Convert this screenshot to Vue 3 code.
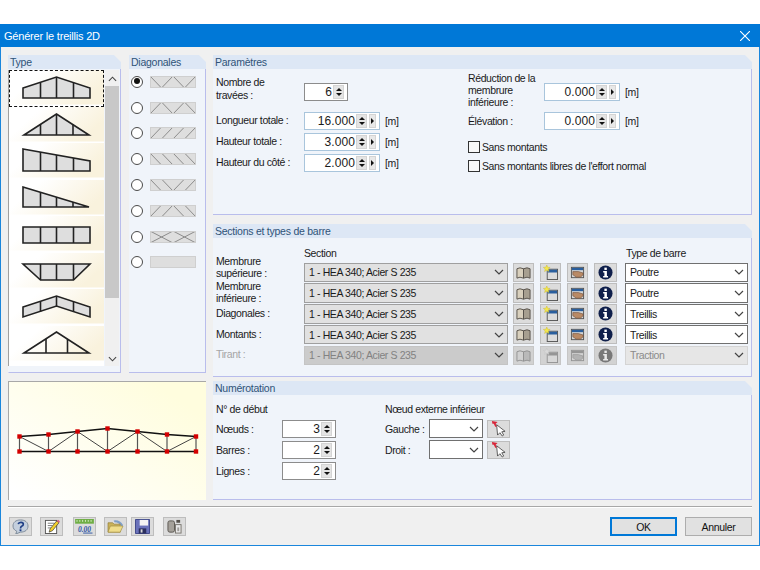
<script setup>
const types = [
  { shape: '14,18 47.5,7 81,18 81,28 14,28', bars: [[31.5, 12.5, 28], [47.5, 7, 28], [64.5, 12.5, 28]] },
  { shape: '15,28 47.5,7 80,28', bars: [[31.5, 17.5, 28], [47.5, 7, 28], [64, 17.5, 28]] },
  { shape: '14,6 81,18 81,28 14,28', bars: [[31.5, 9, 28], [47.5, 12, 28], [64.5, 15, 28]] },
  { shape: '14,7 80,27 14,27', bars: [[31.5, 12.5, 27], [47.5, 17, 27], [64, 22, 27]] },
  { shape: '14,11 81,11 81,27 14,27', bars: [[31.5, 11, 27], [47.5, 11, 27], [64.5, 11, 27]] },
  { shape: '14,11 81,11 64.5,27 31.5,27', bars: [[31.5, 11, 27], [47.5, 11, 27], [64.5, 11, 27]] },
  { shape: '14,18 47.5,7 81,18 81,28 47.5,17 14,28', bars: [[31.5, 12.5, 23], [47.5, 7, 17], [64.5, 12.5, 23]] },
  { shape: '15,27 47.5,6 80,27', bars: [[37, 13, 27], [58.5, 13, 27]], open: true }
]

const diagonals = [
  'M0 0L11.5 12L23 0L34.5 12L46 0',
  'M0 12L11.5 0L23 12L34.5 0L46 12',
  'M0 12L11.5 0M11.5 12L23 0M23 12L34.5 0M34.5 12L46 0',
  'M0 0L11.5 12M11.5 0L23 12M23 0L34.5 12M34.5 0L46 12',
  'M0 0L11.5 12M11.5 0L23 12L34.5 0M34.5 12L46 0',
  'M0 12L11.5 0M11.5 12L23 0L34.5 12M34.5 0L46 12',
  'M0 0L23 12L46 0M0 12L23 0L46 12',
  ''
]

const lengths = [
  { label: 'Longueur totale :', value: '16.000' },
  { label: 'Hauteur totale :', value: '3.000' },
  { label: 'Hauteur du côté :', value: '2.000' }
]

const sections = [
  { label: ['Membrure', 'supérieure :'], type: 'Poutre' },
  { label: ['Membrure', 'inférieure :'], type: 'Poutre' },
  { label: ['Diagonales :'], type: 'Treillis' },
  { label: ['Montants :'], type: 'Treillis' },
  { label: ['Tirant :'], type: 'Traction', disabled: true }
]

const numbering = [
  { label: 'Nœuds :', value: 3 },
  { label: 'Barres :', value: 2 },
  { label: 'Lignes :', value: 2 }
]

const topNodes = [[10.5, 54.5], [39.5, 52.5], [68.5, 49.5], [98.5, 46.5], [128.5, 49.5], [158, 52.5], [187, 54.5]]
const bottomY = 69.5
const diagonalsPreview = [[0, 1], [2, 1], [2, 3], [4, 3], [4, 5], [6, 5]]
const topLine = topNodes.map((p) => p.join(',')).join(' ')
</script>

<template>
  <div class="page">
    <svg class="defs" width="0" height="0">
      <defs>
        <linearGradient id="cell" x1="0" y1="0" x2="1" y2="0.4">
          <stop offset="0.3" stop-color="#ffffff" />
          <stop offset="1" stop-color="#f9f2dd" />
        </linearGradient>
        <linearGradient id="sky" x1="0" y1="1" x2="1" y2="0.1">
          <stop offset="0.05" stop-color="#ffffff" />
          <stop offset="0.9" stop-color="#fffdde" />
        </linearGradient>
      </defs>
      <symbol id="i-book" viewBox="0 0 16 16">
        <path d="M1 4q3-2 7 0v10q-4-2-7 0z" fill="#d9d0bd" stroke="#55504a" />
        <path d="M15 4q-3-2-7 0v10q4-2 7 0z" fill="#a79f90" stroke="#55504a" />
      </symbol>
      <symbol id="i-new" viewBox="0 0 16 16">
        <rect x="4.5" y="4.5" width="11" height="11" fill="#dcdcdc" stroke="#555" />
        <rect x="5" y="5" width="10" height="3" fill="#2a5f9e" />
        <path d="M4 0l1 2.4 2.6.2-2 1.7.7 2.6L4 5.5 1.7 6.9l.7-2.6-2-1.7 2.6-.2z" fill="#f5e84a" stroke="#c9b93a" stroke-width=".5" />
      </symbol>
      <symbol id="i-hand" viewBox="0 0 16 16">
        <rect x="1.5" y="2.5" width="13" height="11" fill="#d6d6d6" stroke="#555" />
        <rect x="2" y="3" width="12" height="2.5" fill="#2a5f9e" />
        <path d="M3 7h6l5 1.5v2l-3 2.5H7L3 10.5z" fill="#b98a66" stroke="#6b4a34" stroke-width=".6" />
      </symbol>
      <symbol id="i-info" viewBox="0 0 16 16">
        <circle cx="8" cy="8" r="7.5" fill="#0f1f4b" />
        <rect x="6.8" y="2.8" width="2.6" height="2.5" fill="#fff" />
        <path d="M5.5 6.500h4v5.200h1.200v1.500H5.500v-1.500h1.300V8H5.500z" fill="#fff" />
      </symbol>
      <symbol id="i-pick" viewBox="0 0 16 18">
        <path d="M6 5l1 11 2.500-2.500L12 17l1.500-1-2-3.500 3.500-.5z" fill="#fff" stroke="#333" stroke-width=".8" />
        <path d="M1 1l6 1-2 2 1 3-1.500 0L3 4 1.500 4z" fill="#d8263a" />
      </symbol>
      <symbol id="i-help" viewBox="0 0 18 16">
        <path d="M9 1c5 0 8 2.500 8 6.500S14 14 9 14l-5 2 1-3C2.500 12 1 10 1 7.500 1 3.500 4 1 9 1z" fill="#c4cfdd" stroke="#7a8896" />
        <path d="M6.500 5.500Q7 3.500 9.500 3.500q2.500 0 2.500 2 0 1.500-1.800 2.300Q9 8.500 9 10" fill="none" stroke="#1f3f86" stroke-width="1.800" />
        <rect x="8" y="11" width="2" height="2" fill="#1f3f86" />
      </symbol>
      <symbol id="i-edit" viewBox="0 0 18 16">
        <rect x="2.5" y="1.5" width="12" height="14" fill="#fff" stroke="#555" />
        <path d="M5 4.500h7M5 7h5M5 9.500h4" stroke="#777" />
        <path d="M6.500 14l1-3.500L14.500 2l2.500 2-7 8.500z" fill="#f2cf2d" stroke="#333" stroke-width=".7" />
        <path d="M14.500 2l2.500 2 1-1.500L16 .8z" fill="#d9607a" />
      </symbol>
      <symbol id="i-folder" viewBox="0 0 18 16">
        <path d="M7 1.500q7-1 10 5l-1 2q-3-5-8-5z" fill="#7f9fc7" />
        <path d="M1 4h5l1.500 1.500H14V14H1z" fill="#c9b25a" stroke="#8f7c36" stroke-width=".7" />
        <path d="M1 14l2.500-6.500H17L14 14z" fill="#efdd8b" stroke="#a08c42" stroke-width=".7" />
      </symbol>
      <symbol id="i-save" viewBox="0 0 16 16">
        <path d="M.5 .5h15v15H.5z" fill="#6a72ba" stroke="#3b4388" />
        <rect x="5" y="1" width="9" height="6" fill="#f4f4f4" />
        <rect x="4" y="10" width="8" height="5.500" fill="#2b2f5e" />
        <rect x="6" y="11" width="2" height="3.500" fill="#d8d8d8" />
      </symbol>
      <symbol id="i-copy" viewBox="0 0 16 16">
        <rect x="1" y="2" width="7" height="12" rx="2" fill="#a5a19a" stroke="#5a5650" />
        <rect x="9" y="6" width="6" height="9" fill="#e8e8e8" stroke="#77736c" />
        <rect x="10" y="1" width="4" height="3" fill="#55514b" />
        <path d="M11 9h2v4h-2z" fill="#9c9a96" />
      </symbol>
      <symbol id="i-down" viewBox="0 0 10 6">
        <path d="M1 1l4 4 4-4" fill="none" stroke="#444" stroke-width="1.200" />
      </symbol>
    </svg>

    <div class="window">
      <div class="titlebar">
        <span class="title">Générer le treillis 2D</span>
        <svg class="close" width="10" height="10" viewBox="0 0 10 10">
          <path d="M0 0l10 10M10 0L0 10" stroke="#fff" stroke-width="1.100" />
        </svg>
      </div>

      <div class="main">
        <div class="left-col">
          <div class="left-top">
            <section class="panel type-panel">
              <h3 class="panel-head">Type</h3>
              <div class="panel-body type-body">
                <div class="type-list">
                  <div v-for="(t, i) in types" :key="i" class="type-cell" :class="{ focused: i === 0 }">
                    <svg width="95" height="36" viewBox="0 0 95 36">
                      <rect width="95" height="34.5" fill="url(#cell)" />
                      <polygon :points="t.shape" :fill="t.open ? 'none' : '#dedede'" stroke="#222" stroke-width="1.6" />
                      <line v-for="(b, k) in t.bars" :key="k" :x1="b[0]" :x2="b[0]" :y1="b[1]" :y2="b[2]" stroke="#222" stroke-width="1.6" />
                    </svg>
                  </div>
                </div>
                <div class="scrollbar">
                  <svg class="chev up" width="9" height="6"><use href="#i-down" /></svg>
                  <div class="thumb"></div>
                  <svg class="chev" width="9" height="6"><use href="#i-down" /></svg>
                </div>
              </div>
            </section>

            <section class="panel diag-panel">
              <h3 class="panel-head">Diagonales</h3>
              <div class="panel-body diag-body">
                <div v-for="(d, i) in diagonals" :key="i" class="diag-row">
                  <span class="radio" :class="{ on: i === 0 }"></span>
                  <svg width="46" height="12" viewBox="0 0 46 12" class="diag-thumb">
                    <rect width="46" height="12" fill="#dedede" />
                    <path :d="d" fill="none" stroke="#8c8c8c" />
                  </svg>
                </div>
              </div>
            </section>
          </div>

          <div class="preview">
            <svg width="197" height="118" viewBox="0 0 197 118">
              <rect width="197" height="118" fill="url(#sky)" />
              <line v-for="p in topNodes" :key="p[0]" :x1="p[0]" :x2="p[0]" :y1="p[1]" :y2="bottomY" stroke="#555" stroke-width="1.2" />
              <line v-for="(d, i) in diagonalsPreview" :key="i" :x1="topNodes[d[0]][0]" :y1="topNodes[d[0]][1]" :x2="topNodes[d[1]][0]" :y2="bottomY" stroke="#444" stroke-width="1" />
              <polyline :points="topLine" fill="none" stroke="#111" stroke-width="1.7" />
              <line x1="10.5" x2="187" :y1="bottomY" :y2="bottomY" stroke="#111" stroke-width="1.7" />
              <g fill="#d40000">
                <rect v-for="p in topNodes" :key="'t' + p[0]" :x="p[0] - 2.2" :y="p[1] - 2.2" width="4.4" height="4.4" />
                <rect v-for="p in topNodes" :key="'b' + p[0]" :x="p[0] - 2.2" :y="bottomY - 2.2" width="4.4" height="4.4" />
              </g>
            </svg>
          </div>
        </div>

        <div class="right-col">
          <section class="panel params-panel">
            <h3 class="panel-head">Paramètres</h3>
            <div class="panel-body params-body">
              <div class="params-col">
                <div class="form-row first-row">
                  <label class="lbl">Nombre de<br />travées :</label>
                  <div class="spin short blue-off">
                    <span class="val">6</span>
                    <span class="updown"><i class="up-a"></i><i class="down-a"></i></span>
                  </div>
                </div>
                <div v-for="row in lengths" :key="row.label" class="form-row">
                  <label class="lbl">{{ row.label }}</label>
                  <div class="spin">
                    <span class="val">{{ row.value }}</span>
                    <span class="updown"><i class="up-a"></i><i class="down-a"></i></span>
                    <span class="next"></span>
                  </div>
                  <span class="unit">[m]</span>
                </div>
              </div>

              <div class="params-col second">
                <div class="form-row reduc-row">
                  <label class="lbl wide">Réduction de la<br />membrure<br />inférieure :</label>
                  <div class="spin">
                    <span class="val">0.000</span>
                    <span class="updown"><i class="up-a"></i><i class="down-a"></i></span>
                    <span class="next"></span>
                  </div>
                  <span class="unit">[m]</span>
                </div>
                <div class="form-row elev-row">
                  <label class="lbl wide">Élévation :</label>
                  <div class="spin">
                    <span class="val">0.000</span>
                    <span class="updown"><i class="up-a"></i><i class="down-a"></i></span>
                    <span class="next"></span>
                  </div>
                  <span class="unit">[m]</span>
                </div>
                <div class="check first-check"><span class="box"></span>Sans montants</div>
                <div class="check"><span class="box"></span>Sans montants libres de l'effort normal</div>
              </div>
            </div>
          </section>

          <section class="panel sections-panel">
            <h3 class="panel-head">Sections et types de barre</h3>
            <div class="panel-body sections-body">
              <div class="sec-head">
                <span class="sec-col-a">Section</span>
                <span class="sec-col-b">Type de barre</span>
              </div>
              <div v-for="(s, i) in sections" :key="i" class="sec-row" :class="{ disabled: s.disabled }">
                <label class="sec-lbl" :class="{ raised: i === 0 }"><span v-for="l in s.label" :key="l">{{ l }}</span></label>
                <div class="select gray section-select">
                  <span>1 - HEA 340; Acier S 235</span>
                  <svg width="10" height="6"><use href="#i-down" /></svg>
                </div>
                <button class="tool first-tool"><svg width="15" height="15"><use href="#i-book" /></svg></button>
                <button class="tool"><svg width="15" height="15"><use href="#i-new" /></svg></button>
                <button class="tool"><svg width="15" height="15"><use href="#i-hand" /></svg></button>
                <button class="tool info-tool"><svg width="15" height="15"><use href="#i-info" /></svg></button>
                <div class="select white type-select">
                  <span>{{ s.type }}</span>
                  <svg width="10" height="6"><use href="#i-down" /></svg>
                </div>
              </div>
            </div>
          </section>

          <section class="panel num-panel">
            <h3 class="panel-head">Numérotation</h3>
            <div class="panel-body num-body">
              <div class="num-col">
                <div class="num-title">N° de début</div>
                <div v-for="n in numbering" :key="n.label" class="num-row">
                  <label class="num-lbl">{{ n.label }}</label>
                  <div class="spin num-spin blue-off">
                    <span class="val">{{ n.value }}</span>
                    <span class="updown"><i class="up-a"></i><i class="down-a"></i></span>
                  </div>
                </div>
              </div>
              <div class="num-col node-col">
                <div class="num-title">Nœud externe inférieur</div>
                <div v-for="side in ['Gauche :', 'Droit :']" :key="side" class="num-row">
                  <label class="node-lbl">{{ side }}</label>
                  <div class="select white node-select">
                    <span></span>
                    <svg width="10" height="6"><use href="#i-down" /></svg>
                  </div>
                  <button class="tool pick"><svg width="15" height="17"><use href="#i-pick" /></svg></button>
                </div>
              </div>
            </div>
          </section>
        </div>
      </div>

      <div class="separator"></div>

      <div class="footer">
        <div class="foot-icons">
          <button class="tool foot"><svg width="17" height="15"><use href="#i-help" /></svg></button>
          <button class="tool foot"><svg width="17" height="15"><use href="#i-edit" /></svg></button>
          <button class="tool foot">
            <svg width="19" height="15" viewBox="0 0 20 16">
              <rect width="20" height="5" fill="#6fae45" />
              <path d="M2 1v2M5 1v2M8 1v2M11 1v2M14 1v2M17 1v2" stroke="#d7ecc6" />
              <text x="10" y="13.5" text-anchor="middle" class="zero-text">0.00</text>
              <path d="M8.5 15h10" stroke="#2f55a5" />
            </svg>
          </button>
          <button class="tool foot"><svg width="17" height="15"><use href="#i-folder" /></svg></button>
          <button class="tool foot"><svg width="15" height="15"><use href="#i-save" /></svg></button>
          <button class="tool foot"><svg width="15" height="15"><use href="#i-copy" /></svg></button>
        </div>
        <div class="foot-actions">
          <button class="action primary">OK</button>
          <button class="action">Annuler</button>
        </div>
      </div>
    </div>
  </div>
</template>

<style>
html,
body {
  margin: 0;
  background: #fff;
}
</style>

<style scoped>
.page {
  width: 760px;
  height: 570px;
  padding-top: 24px;
  box-sizing: border-box;
  background: #fff;
  font-family: "Liberation Sans", Arial, sans-serif;
  font-size: 10.5px;
  letter-spacing: -0.38px;
  color: #1a1a1a;
  overflow: hidden;
}

.defs {
  position: absolute;
}

.zero-text {
  font-family: "Liberation Serif", serif;
  font-size: 8px;
  font-style: italic;
  font-weight: 700;
  letter-spacing: 0;
  fill: #2f55a5;
}

.window {
  width: 760px;
  height: 522px;
  box-sizing: border-box;
  background: #f0f0f0;
  border: 1px solid #1a86dc;
  border-top: none;
}

.titlebar {
  height: 23px;
  margin: 0 -1px;
  padding: 0 10px 0 4px;
  background: #0078d7;
  color: #fff;
  display: flex;
  align-items: center;
  justify-content: space-between;
}

.title {
  font-size: 11px;
  letter-spacing: -0.2px;
}

.main {
  display: flex;
  gap: 7px;
  padding: 8px 7px 0;
}

.left-col {
  width: 198px;
  display: flex;
  flex-direction: column;
  gap: 8px;
}

.left-top {
  display: flex;
  gap: 8px;
  height: 318px;
}

.right-col {
  width: 539px;
  display: flex;
  flex-direction: column;
}

.panel {
  display: flex;
  flex-direction: column;
  margin: 0;
}

.panel-head {
  margin: 0;
  height: 14px;
  line-height: 14px;
  padding-left: 2px;
  flex-shrink: 0;
  font-weight: 400;
  font-size: 10.5px;
  letter-spacing: -0.25px;
  color: #2f5378;
  background: #dde7f5;
  clip-path: polygon(0 0, calc(100% - 7px) 0, 100% 7px, 100% 100%, 0 100%);
}

.panel-body {
  flex: 1;
  min-height: 0;
  background: #f0f4fa;
  border-right: 1px solid #b9bdec;
  border-bottom: 1px solid #b9bdec;
}

.type-panel {
  width: 113px;
}

.diag-panel {
  width: 77px;
}

.type-body {
  display: flex;
  align-items: flex-start;
  padding-top: 1px;
  border-left: 1px solid #f0f4fa;
}

.type-list {
  width: 95px;
  height: 296px;
  overflow: hidden;
  background: #fff;
  box-shadow: -1px 0 0 #a0a0a0;
}

.type-cell {
  height: 36.5px;
  position: relative;
}

.type-cell svg {
  display: block;
}

.type-cell.focused::after {
  content: "";
  position: absolute;
  inset: 0;
  border: 1px dashed #111;
}

.scrollbar {
  width: 14px;
  height: 296px;
  margin-left: 1px;
  background: #f0f0f0;
  display: flex;
  flex-direction: column;
  align-items: center;
  overflow: hidden;
}

.chev {
  flex-shrink: 0;
  margin-top: 58px;
}

.chev.up {
  transform: rotate(180deg);
  margin: 6px 0 4px;
}

.thumb {
  width: 14px;
  height: 212px;
  background: #c8c8c8;
  flex-shrink: 0;
}

.diag-row {
  height: 25.8px;
  display: flex;
  align-items: center;
  padding-left: 2px;
  box-sizing: border-box;
}

.radio {
  width: 12px;
  height: 12px;
  box-sizing: border-box;
  border: 1.5px solid #4a4a4a;
  border-radius: 50%;
  background: #fff;
  margin-right: 7px;
  position: relative;
}

.radio.on::after {
  content: "";
  position: absolute;
  left: 1.5px;
  top: 1.5px;
  width: 6px;
  height: 6px;
  border-radius: 50%;
  background: #111;
}

.diag-thumb {
  outline: 1px solid #cfcfcf;
  outline-offset: -1px;
}

.preview {
  height: 119px;
  border-top: 1px solid #a8a8a8;
  border-left: 1px solid #a8a8a8;
  background: #fff;
  box-sizing: border-box;
}

.preview svg {
  display: block;
}

.params-panel {
  height: 160px;
}

.params-body {
  display: flex;
  padding: 7px 0 0 3px;
}

.params-col {
  width: 252px;
}

.form-row {
  display: flex;
  align-items: center;
  height: 21px;
}

.first-row {
  height: 34px;
  align-items: flex-start;
}

.lbl {
  width: 88px;
  flex-shrink: 0;
  line-height: 12.5px;
  white-space: nowrap;
}

.lbl.wide {
  width: 76px;
}

.spin {
  width: 76px;
  height: 18px;
  box-sizing: border-box;
  border: 1px solid #a9c5dc;
  background: #fff;
  display: flex;
  align-items: center;
  justify-content: flex-end;
  padding-right: 3px;
  font-size: 12px;
  letter-spacing: 0.1px;
  flex-shrink: 0;
}

.spin.short {
  width: 44px;
  margin-top: 7px;
}

.blue-off {
  border-color: #8c8c8c;
}

.val {
  flex: 1;
  text-align: right;
  padding-right: 1px;
}

.updown {
  width: 11px;
  height: 14px;
  background: #e4e4e4;
  display: flex;
  flex-direction: column;
  align-items: center;
  justify-content: space-between;
  padding: 2px 0;
  box-sizing: border-box;
  border: 1px solid #d4d4d4;
}

.up-a,
.down-a {
  width: 0;
  height: 0;
  border-left: 3px solid transparent;
  border-right: 3px solid transparent;
}

.up-a {
  border-bottom: 3px solid #111;
}

.down-a {
  border-top: 3px solid #111;
}

.next {
  width: 7px;
  height: 14px;
  margin-left: 2px;
  background: #e8e8e8;
  border: 1px solid #d4d4d4;
  box-sizing: border-box;
  position: relative;
}

.next::after {
  content: "";
  position: absolute;
  left: 1px;
  top: 3px;
  border-top: 3px solid transparent;
  border-bottom: 3px solid transparent;
  border-left: 3px solid #111;
}

.unit {
  margin-left: 5px;
}

.second {
  width: auto;
}

.reduc-row {
  height: 36px;
  margin-top: -4px;
  align-items: flex-start;
}

.reduc-row .lbl {
  line-height: 12px;
}

.reduc-row .spin {
  margin-top: 11px;
}

.reduc-row .unit {
  margin-top: 14px;
}

.elev-row {
  height: 20px;
  margin-top: 3px;
}

.check {
  display: flex;
  align-items: center;
  height: 12px;
  margin-top: 7px;
}

.first-check {
  margin-top: 10px;
}

.box {
  width: 12px;
  height: 12px;
  box-sizing: border-box;
  border: 1px solid #333;
  background: #f8f8f8;
  margin-right: 2px;
}

.sections-panel {
  height: 153px;
  margin-top: 9px;
}

.sections-body {
  padding: 0 3px;
}

.sec-head {
  display: flex;
  height: 24px;
  align-items: flex-end;
  padding-bottom: 3px;
  box-sizing: border-box;
}

.sec-col-a {
  margin-left: 88px;
  width: 322px;
}

.sec-row {
  display: flex;
  align-items: center;
  height: 20.75px;
}

.sec-lbl {
  width: 88px;
  flex-shrink: 0;
  display: flex;
  flex-direction: column;
  line-height: 12px;
  margin-top: -2px;
}

.sec-lbl.raised {
  margin-top: -10px;
}

.select {
  height: 19.5px;
  box-sizing: border-box;
  display: flex;
  align-items: center;
  justify-content: space-between;
  padding: 0 3px 0 4px;
  flex-shrink: 0;
}

.select svg {
  flex-shrink: 0;
}

.select.gray {
  background: #e1e1e1;
  border: 1px solid #9f9f9f;
}

.select.white {
  background: #fff;
  border: 1px solid #707070;
}

.section-select {
  width: 204px;
}

.type-select {
  width: 123px;
  margin-left: 8px;
}

.tool {
  width: 21px;
  height: 19.5px;
  padding: 0;
  margin-left: 6px;
  box-sizing: border-box;
  border: 1px solid #bdbdbd;
  background: #dcdcdc;
  display: flex;
  align-items: center;
  justify-content: center;
  flex-shrink: 0;
}

.first-tool {
  margin-left: 5px;
}

.info-tool {
  width: 23px;
}

.disabled .sec-lbl {
  color: #a5a5a5;
}

.disabled .select.gray {
  background: #cbcbcb;
  border-color: #c4c4c4;
  color: #828282;
}

.disabled .select.white {
  background: #e6e6e6;
  border-color: #d4d4d4;
  color: #8a8a8a;
}

.disabled .tool svg {
  filter: grayscale(1) opacity(0.5);
}

.disabled .tool {
  background: #d2d2d2;
  border-color: #c6c6c6;
}

.num-panel {
  height: 119px;
  margin-top: 4px;
}

.num-body {
  display: flex;
  padding: 6px 0 0 3px;
}

.num-col {
  width: 169px;
}

.num-title {
  height: 16px;
  line-height: 16px;
  margin-bottom: 1px;
  white-space: nowrap;
}

.num-row {
  display: flex;
  align-items: center;
  height: 21px;
}

.num-lbl {
  width: 66px;
}

.num-spin {
  width: 54px;
}

.node-lbl {
  width: 44px;
  white-space: nowrap;
}

.node-select {
  width: 54px;
  height: 19px;
}

.pick {
  width: 23px;
  height: 18px;
  margin-left: 4px;
}

.separator {
  height: 1px;
  margin: 6px 7px 0;
  background: #a8a8a8;
  box-shadow: 0 1px 0 #fff;
}

.footer {
  display: flex;
  justify-content: space-between;
  padding: 10px 7px 0 8px;
}

.foot-icons {
  display: flex;
}

.foot {
  width: 23px;
  height: 19px;
  margin-left: 8px;
}

.foot:first-child {
  margin-left: 0;
}

.foot:nth-child(3) {
  margin-left: 10px;
}

.foot:nth-child(5) {
  margin-left: 4px;
}

.foot:nth-child(6) {
  margin-left: 9px;
}

.foot-actions {
  display: flex;
  gap: 8px;
}

.action {
  width: 67px;
  height: 19px;
  padding: 0;
  box-sizing: border-box;
  border: 1px solid #adadad;
  background: #e1e1e1;
  font-family: inherit;
  font-size: 10.5px;
  letter-spacing: -0.3px;
  color: #111;
}

.action.primary {
  border: 2px solid #0078d7;
}
</style>
